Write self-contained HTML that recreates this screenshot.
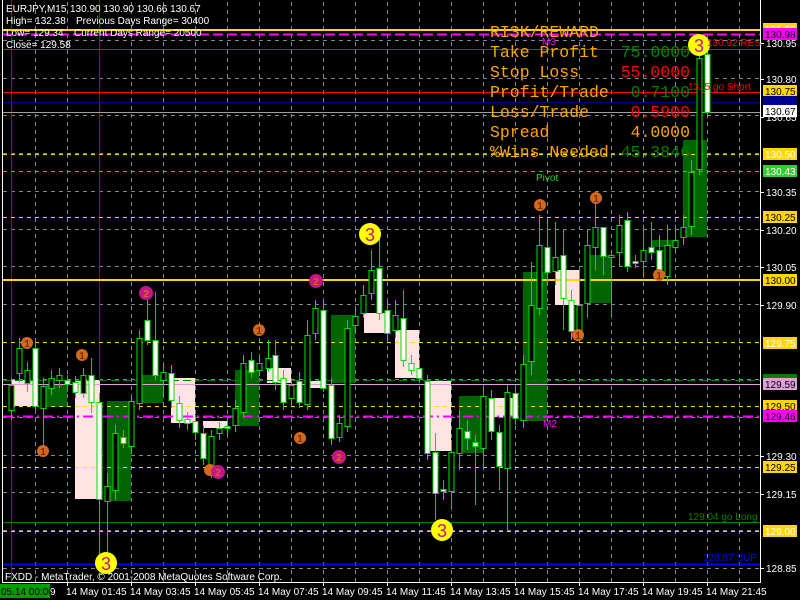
<!DOCTYPE html>
<html><head><meta charset="utf-8"><style>
html,body{margin:0;padding:0;background:#000;width:800px;height:600px;overflow:hidden}
svg{display:block}
text{font-family:"Liberation Sans",sans-serif;white-space:pre}
.m text{font-family:"Liberation Mono",monospace;font-size:16.5px}
</style></head><body>
<svg width="800" height="600" viewBox="0 0 800 600" xml:space="preserve">
<rect width="800" height="600" fill="#000"/>
<g stroke="#778899" stroke-width="1" stroke-dasharray="4,4">
<path d="M3 568.5H760M3 530.5H760M3 492.5H760M3 455.5H760M3 417.5H760M3 379.5H760M3 342.5H760M3 304.5H760M3 266.5H760M3 229.5H760M3 191.5H760M3 153.5H760M3 115.5H760M3 78.5H760M3 40.5H760"/>
<path d="M35.5 2V582M67.5 2V582M131.5 2V582M163.5 2V582M195.5 2V582M227.5 2V582M259.5 2V582M291.5 2V582M323.5 2V582M355.5 2V582M387.5 2V582M419.5 2V582M451.5 2V582M483.5 2V582M515.5 2V582M547.5 2V582M579.5 2V582M611.5 2V582M643.5 2V582M675.5 2V582M707.5 2V582M739.5 2V582"/>
</g>
<path d="M11.5 0V582M99.5 0V582" stroke="#006000"/>
<g fill="#ffe4e1">
<rect x="12" y="380" width="22" height="26"/><rect x="75" y="380" width="25" height="119"/>
<rect x="171" y="378" width="24" height="45"/><rect x="203" y="421" width="25" height="7"/>
<rect x="267" y="368" width="24" height="15"/><rect x="310" y="381" width="13" height="7"/>
<rect x="364" y="313" width="23" height="20"/><rect x="395" y="330" width="24" height="48"/>
<rect x="430" y="381" width="21" height="70"/><rect x="490" y="398" width="23" height="19"/>
<rect x="555" y="270" width="24" height="35"/>
</g>
<g fill="#006400">
<rect x="46" y="384" width="21" height="23"/><rect x="107" y="401" width="24" height="100"/>
<rect x="142" y="375" width="21" height="28"/><rect x="235" y="370" width="24" height="56"/>
<rect x="331" y="315" width="24" height="68"/><rect x="459" y="396" width="24" height="57"/>
<rect x="523" y="272" width="24" height="149"/><rect x="588" y="255" width="23" height="48"/>
<rect x="652" y="240" width="21" height="7"/><rect x="683" y="140" width="24" height="97"/>
</g>
<path d="M3 30H760" stroke="#ffd700" stroke-width="2"/>
<path d="M3 34.5H760" stroke="#ff00ff" stroke-width="2" stroke-dasharray="10,4"/>
<path d="M3 49.5H760" stroke="#ff0000"/>
<path d="M3 92.5H760" stroke="#ff0000"/>
<path d="M3 102.5H760" stroke="#000080"/>
<path d="M3 112.5H760" stroke="#a0a0a0"/>
<path d="M3 154.5H760M3 217.5H760M3 342.5H760M3 406.5H760M3 467.5H760M3 531.5H760" stroke="#ffd700" stroke-dasharray="4,4"/>
<path d="M3 171.5H760" stroke="#32cd32" stroke-dasharray="4,4"/>
<path d="M3 380.5H760" stroke="#008000" stroke-dasharray="8,4"/>
<path d="M3 280H760" stroke="#ffd700" stroke-width="2"/>
<path d="M3 384.5H760" stroke="#dda0dd"/>
<path d="M3 416.5H760" stroke="#ff00ff" stroke-width="2" stroke-dasharray="10,4,2,4"/>
<path d="M3 522.5H760" stroke="#008000"/>
<path d="M3 564.5H760" stroke="#0000ff" stroke-width="2"/>
<path stroke="#00e000" stroke-width="1" fill="none" d="M11.5 378V420M19.5 338V382M27.5 362V392M35.5 340V412M43.5 378V452M51.5 370V395M59.5 368V388M67.5 375V392M75.5 376V398M83.5 368V398M91.5 358V413M99.5 393V560M107.5 473V565M115.5 425V500M123.5 430V448M131.5 395V452M139.5 330V410M147.5 300V345M155.5 292V380M163.5 365V395M171.5 365V408M179.5 396V428M187.5 412V430M195.5 415V440M203.5 426V465M211.5 430V478M219.5 422V440M227.5 420V434M235.5 400V432M243.5 355V418M251.5 352V378M259.5 355V376M268.5 340V372M275.5 340V390M283.5 370V410M291.5 380V405M299.5 372V408M307.5 320V410M315.5 300V340M323.5 300V392M331.5 378V445M339.5 415V442M347.5 320V432M355.5 308V330M363.5 285V318M371.5 250V300M379.5 237V320M387.5 300V340M395.5 300V338M403.5 290V367M411.5 355V375M419.5 360V383M427.5 375V460M435.5 433V520M443.5 480V500M451.5 440V510M459.5 410V470M467.5 420V450M475.5 435V505M483.5 385V470M491.5 390V440M499.5 425V490M507.5 385V530M515.5 385V425M523.5 355V428M531.5 262V375M539.5 215V315M547.5 222V285M555.5 222V285M563.5 230V330M571.5 290V340M579.5 270V338M587.5 230V318M595.5 200V270M603.5 230V275M611.5 250V318M619.5 215V266M627.5 212V272M635.5 255V268M643.5 225V275M651.5 222V260M659.5 235V280M667.5 225V285M675.5 225V250M683.5 215V245M691.5 160V235M699.5 48V175M707.5 40V118"/>
<g fill="#000" stroke="#00e000">
<rect x="9" y="385.5" width="5" height="25"/><rect x="17" y="348.5" width="5" height="25"/><rect x="25" y="370.5" width="5" height="13"/>
<rect x="41" y="386.5" width="5" height="22"/><rect x="49" y="378.5" width="5" height="10"/><rect x="57" y="375.5" width="5" height="5"/>
<rect x="81" y="375.5" width="5" height="18"/><rect x="105" y="486.5" width="5" height="15"/><rect x="113" y="433.5" width="5" height="57"/>
<rect x="129" y="401.5" width="5" height="45"/><rect x="137" y="338.5" width="5" height="65"/><rect x="161" y="372.5" width="5" height="8"/>
<rect x="209" y="436.5" width="5" height="34"/><rect x="217" y="428.5" width="5" height="5"/><rect x="233" y="408.5" width="5" height="17"/>
<rect x="241" y="363.5" width="5" height="49"/><rect x="257" y="363.5" width="5" height="7"/><rect x="266" y="358.5" width="5" height="10"/>
<rect x="289" y="385.5" width="5" height="13"/><rect x="305" y="335.5" width="5" height="69"/><rect x="313" y="308.5" width="5" height="25"/>
<rect x="337" y="423.5" width="5" height="14"/><rect x="345" y="328.5" width="5" height="98"/><rect x="353" y="316.5" width="5" height="9"/>
<rect x="361" y="295.5" width="5" height="18"/><rect x="369" y="270.5" width="5" height="23"/><rect x="393" y="315.5" width="5" height="15"/>
<rect x="449" y="452.5" width="5" height="39"/><rect x="457" y="428.5" width="5" height="25"/><rect x="481" y="396.5" width="5" height="52"/>
<rect x="505" y="392.5" width="5" height="76"/><rect x="521" y="364.5" width="5" height="56"/><rect x="529" y="305.5" width="5" height="56"/>
<rect x="537" y="245.5" width="5" height="63"/><rect x="553" y="257.5" width="5" height="14"/><rect x="577" y="305.5" width="5" height="25"/>
<rect x="585" y="245.5" width="5" height="58"/><rect x="593" y="227.5" width="5" height="20"/><rect x="609" y="255.5" width="5" height="2"/>
<rect x="617" y="225.5" width="5" height="27"/><rect x="641" y="250.5" width="5" height="11"/><rect x="665" y="245.5" width="5" height="31"/>
<rect x="673" y="240.5" width="5" height="7"/><rect x="681" y="227.5" width="5" height="10"/><rect x="689" y="172.5" width="5" height="54"/>
<rect x="697" y="58.5" width="5" height="111"/>
</g>
<g fill="#fff" stroke="#00e000">
<rect x="33" y="348.5" width="5" height="58"/><rect x="65" y="380.5" width="5" height="4"/><rect x="73" y="382.5" width="5" height="10"/>
<rect x="89" y="375.5" width="5" height="27"/><rect x="97" y="402.5" width="5" height="97"/><rect x="121" y="437.5" width="5" height="6"/>
<rect x="145" y="320.5" width="5" height="20"/><rect x="153" y="340.5" width="5" height="35"/><rect x="169" y="373.5" width="5" height="27"/>
<rect x="177" y="403.5" width="5" height="17"/><rect x="185" y="419.5" width="5" height="4"/><rect x="193" y="421.5" width="5" height="11"/>
<rect x="201" y="433.5" width="5" height="25"/><rect x="225" y="426.5" width="5" height="2"/><rect x="249" y="360.5" width="5" height="12"/>
<rect x="273" y="355.5" width="5" height="27"/><rect x="281" y="378.5" width="5" height="24"/><rect x="297" y="381.5" width="5" height="21"/>
<rect x="321" y="310.5" width="5" height="78"/><rect x="329" y="385.5" width="5" height="53"/><rect x="377" y="268.5" width="5" height="45"/>
<rect x="385" y="310.5" width="5" height="23"/><rect x="401" y="318.5" width="5" height="42"/><rect x="409" y="363.5" width="5" height="7"/>
<rect x="417" y="368.5" width="5" height="10"/><rect x="425" y="381.5" width="5" height="72"/><rect x="433" y="452.5" width="5" height="41"/>
<rect x="441" y="489.5" width="5" height="2"/><rect x="465" y="431.5" width="5" height="7"/><rect x="473" y="442.5" width="5" height="4"/>
<rect x="489" y="398.5" width="5" height="33"/><rect x="497" y="432.5" width="5" height="34"/><rect x="513" y="393.5" width="5" height="25"/>
<rect x="545" y="247.5" width="5" height="25"/><rect x="561" y="255.5" width="5" height="43"/><rect x="569" y="300.5" width="5" height="31"/>
<rect x="601" y="227.5" width="5" height="29"/><rect x="625" y="220.5" width="5" height="46"/><rect x="633" y="261.5" width="5" height="2"/>
<rect x="649" y="247.5" width="5" height="5"/><rect x="657" y="250.5" width="5" height="20"/><rect x="705" y="54.5" width="5" height="58"/>
</g>
<path d="M2.5 0V582.5H760.5V0" fill="none" stroke="#fff"/>
<path d="M67.5 583V586M131.5 583V586M195.5 583V586M259.5 583V586M323.5 583V586M387.5 583V586M451.5 583V586M515.5 583V586M579.5 583V586M643.5 583V586M707.5 583V586M761 43.5H764M761 79.5H764M761 117.5H764M761 192.5H764M761 230.5H764M761 267.5H764M761 305.5H764M761 456.5H764M761 494.5H764M761 568.5H764" stroke="#fff"/>
<g font-size="10" font-weight="bold" text-anchor="middle">
<g fill="#d2691e"><circle cx="27" cy="343" r="6"/><circle cx="82" cy="355" r="6"/><circle cx="43" cy="451" r="6"/><circle cx="259" cy="330" r="6"/><circle cx="300" cy="438" r="6"/><circle cx="540" cy="205" r="6"/><circle cx="596" cy="198" r="6"/><circle cx="659" cy="275" r="6"/><circle cx="578" cy="335" r="6"/><circle cx="210" cy="470" r="6"/></g>
<g fill="#7a3000"><text x="27" y="347">1</text><text x="82" y="359">1</text><text x="43" y="455">1</text><text x="259" y="334">1</text><text x="300" y="442">1</text><text x="540" y="209">1</text><text x="596" y="202">1</text><text x="659" y="279">1</text><text x="578" y="339">1</text></g>
<g fill="#c71585"><circle cx="146" cy="293" r="7"/><circle cx="316" cy="281" r="7"/><circle cx="339" cy="457" r="7"/><circle cx="218" cy="472" r="7"/></g>
<g fill="#d2691e"><text x="146" y="297">2</text><text x="316" y="285">2</text><text x="339" y="461">2</text><text x="218" y="476">2</text></g>
<g fill="#ffff00"><circle cx="370" cy="234" r="11"/><circle cx="442" cy="530" r="11"/><circle cx="106" cy="563" r="11"/><circle cx="699" cy="45" r="11"/></g>
<g fill="#c71585" font-size="18" font-weight="normal"><text x="370" y="241">3</text><text x="442" y="537">3</text><text x="106" y="570">3</text><text x="699" y="52">3</text></g>
</g>
<g font-size="10">
<text x="536" y="181" fill="#32cd32">Pivot</text>
<text x="542" y="45" fill="#ff00ff">M3</text>
<text x="543" y="427" fill="#ff00ff">M2</text>
<text x="707" y="46" fill="#ff0000">130.92 RES</text>
<text x="688" y="90" fill="#ff0000">13..5 go Short</text>
<text x="688" y="520" fill="#008000">129.04 go Long</text>
<text x="703" y="561" fill="#0000ff">128.87 SUP</text>
</g>
<g class="m">
<text x="490" y="37" fill="#ffa500">RISK/REWARD</text>
<text x="490" y="57" fill="#ffa500">Take Profit</text><text x="690" y="57" fill="#008000" text-anchor="end">75.0000</text>
<text x="490" y="77" fill="#ffa500">Stop Loss</text><text x="690" y="77" fill="#ff0000" text-anchor="end">55.0000</text>
<text x="490" y="97" fill="#ffa500">Profit/Trade</text><text x="690" y="97" fill="#008000" text-anchor="end">0.7100</text>
<text x="490" y="117" fill="#ffa500">Loss/Trade</text><text x="690" y="117" fill="#ff0000" text-anchor="end">0.5900</text>
<text x="490" y="137" fill="#ffa500">Spread</text><text x="690" y="137" fill="#ffa500" text-anchor="end">4.0000</text>
<text x="490" y="157" fill="#ffa500">%Wins Needed</text><text x="690" y="157" fill="#008000" text-anchor="end">45.3846</text>
</g>
<g font-size="10" fill="#fff">
<text x="6" y="12">EURJPY,M15</text><text x="70" y="12">130.90 130.90 130.66 130.67</text>
<text x="6" y="24">High= 132.38</text><text x="76" y="24">Previous Days Range= 30400</text>
<text x="6" y="36">Low= 129.34</text><text x="74" y="36">Current Days Range= 20500</text>
<text x="6" y="48">Close= 129.58</text>
<text x="5" y="580">FXDD - MetaTrader, © 2001-2008 MetaQuotes Software Corp.</text>
</g>
<g font-size="10" fill="#fff">
<text x="766" y="47">130.95</text><text x="766" y="83">130.80</text><text x="766" y="121">130.65</text>
<text x="766" y="196">130.35</text><text x="766" y="234">130.20</text><text x="766" y="271">130.05</text>
<text x="766" y="309">129.90</text><text x="766" y="460">129.30</text><text x="766" y="498">129.15</text><text x="766" y="572">128.85</text>
</g>
<g font-size="10">
<rect x="763" y="23" width="34" height="12" fill="#ffd700"/><text x="765" y="33" fill="#fff">131.00</text>
<rect x="763" y="28" width="34" height="12" fill="#ff00ff"/><text x="765" y="38" fill="#000">130.98</text>
<rect x="763" y="85" width="34" height="12" fill="#ffd700"/><text x="765" y="95" fill="#000">130.75</text>
<rect x="763" y="96" width="34" height="11" fill="#000080"/><text x="765" y="105" fill="#0000cd">130.71</text>
<rect x="763" y="105" width="34" height="12" fill="#fff"/><text x="765" y="115" fill="#000">130.67</text>
<rect x="763" y="148" width="34" height="12" fill="#ffd700"/><text x="765" y="158" fill="#fff">130.50</text>
<rect x="763" y="165" width="34" height="12" fill="#32cd32"/><text x="765" y="175" fill="#fff">130.43</text>
<rect x="763" y="211" width="34" height="12" fill="#ffd700"/><text x="765" y="221" fill="#000">130.25</text>
<rect x="763" y="274" width="34" height="12" fill="#ffd700"/><text x="765" y="284" fill="#000">130.00</text>
<rect x="763" y="337" width="34" height="12" fill="#ffd700"/><text x="765" y="347" fill="#fff">129.75</text>
<rect x="763" y="374" width="34" height="6" fill="#008000"/>
<rect x="763" y="378" width="34" height="12" fill="#dda0dd"/><text x="765" y="388" fill="#000">129.59</text>
<rect x="763" y="400" width="34" height="12" fill="#ffd700"/><text x="765" y="410" fill="#000">129.50</text>
<rect x="763" y="410" width="34" height="12" fill="#ff00ff"/><text x="765" y="420" fill="#000">129.46</text>
<rect x="763" y="461" width="34" height="12" fill="#ffd700"/><text x="765" y="471" fill="#000">129.25</text>
<rect x="763" y="525" width="34" height="12" fill="#ffd700"/><text x="765" y="535" fill="#fff">129.00</text>
</g>
<rect x="0" y="584" width="50" height="14" fill="#00a000"/>
<g font-size="10" fill="#fff">
<text x="1" y="595" fill="#000">05.14 00:00</text><text x="50" y="595">9</text>
<text x="66" y="595">14 May 01:45</text><text x="130" y="595">14 May 03:45</text><text x="194" y="595">14 May 05:45</text>
<text x="258" y="595">14 May 07:45</text><text x="322" y="595">14 May 09:45</text><text x="386" y="595">14 May 11:45</text>
<text x="450" y="595">14 May 13:45</text><text x="514" y="595">14 May 15:45</text><text x="578" y="595">14 May 17:45</text>
<text x="642" y="595">14 May 19:45</text><text x="706" y="595">14 May 21:45</text>
</g>
</svg>
</body></html>
